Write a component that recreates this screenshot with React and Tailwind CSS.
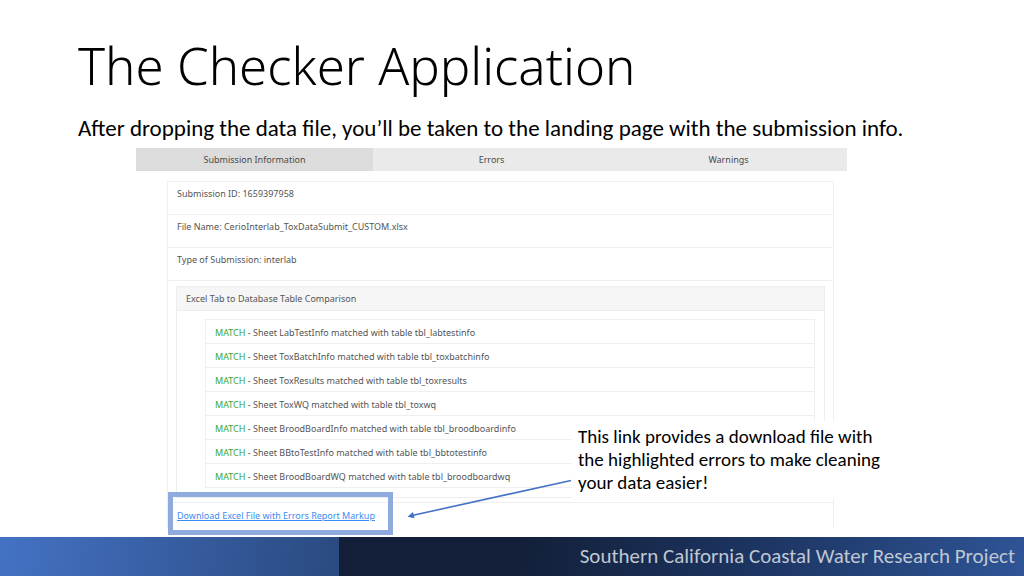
const tabs = ["Submission Information", "Errors", "Warnings"];

const details = [
  ["Submission ID", "1659397958"],
  ["File Name", "CerioInterlab_ToxDataSubmit_CUSTOM.xlsx"],
  ["Type of Submission", "interlab"],
];

const matches = [
  ["LabTestInfo", "tbl_labtestinfo"],
  ["ToxBatchInfo", "tbl_toxbatchinfo"],
  ["ToxResults", "tbl_toxresults"],
  ["ToxWQ", "tbl_toxwq"],
  ["BroodBoardInfo", "tbl_broodboardinfo"],
  ["BBtoTestInfo", "tbl_bbtotestinfo"],
  ["BroodBoardWQ", "tbl_broodboardwq"],
];

function Tabs() {
  return (
    <div role="tablist" className="grid grid-cols-3 bg-[#eaeaea]">
      {tabs.map((tab, i) => (
        <button
          key={tab}
          type="button"
          role="tab"
          aria-selected={i === 0}
          className="h-[23px] text-center text-[#4a4a4a] aria-selected:bg-[#dcdcdc]"
        >
          {tab}
        </button>
      ))}
    </div>
  );
}

function Comparison() {
  return (
    <section className="mx-2 mt-[5px] mb-1 border border-[#ededed]">
      <h2 className="flex h-6 items-center border-b border-[#ededed] bg-[#f6f6f6] px-[9px]">
        Excel Tab to Database Table Comparison
      </h2>
      <ul className="mt-2 mr-[9px] mb-[9px] ml-7 border border-b-0 border-[#efefef]">
        {matches.map(([sheet, table]) => (
          <li key={sheet} className="h-6 border-b border-[#efefef] px-[9px] pt-[5px]">
            <span className="text-[#3aa63a]">MATCH</span> - Sheet {sheet} matched with table {table}
          </li>
        ))}
      </ul>
    </section>
  );
}

function Callout() {
  return (
    <>
      <p className="absolute top-[273px] left-[436px] w-[340px] bg-white py-1 pl-[6px] font-[Carlito,Lato,sans-serif] text-[19px] leading-[23px] text-black">
        This link provides a download file with
        <br />
        the highlighted errors to make cleaning
        <br />
        your data easier!
      </p>
      <svg
        className="absolute top-[328px] left-[268px]"
        width="170"
        height="44"
        viewBox="0 0 170 44"
        aria-hidden="true"
      >
        <path d="M167 4.500 L8 39.500" stroke="#4472c4" strokeWidth="1.600" fill="none" />
        <path d="M3.500 40.700 L9 36 L10.500 42.300 Z" fill="#4472c4" />
      </svg>
    </>
  );
}

export default function App() {
  return (
    <div className="flex min-h-screen flex-col bg-white font-[Carlito,Lato,sans-serif] text-black">
      <header className="px-[78px] pt-8">
        <h1 className="font-['Noto_Sans','Open_Sans',sans-serif] text-[51px] leading-[66px] font-light">
          The Checker Application
        </h1>
        <p className="mt-4 text-[23px] leading-7 whitespace-nowrap">
          After dropping the data file, you’ll be taken to the landing page with the submission info.
        </p>
      </header>
      <main className="relative mt-[6px] mr-[177px] ml-[136px] flex-1 font-['Noto_Sans',sans-serif] text-[9px] leading-4 text-[#555]">
        <Tabs />
        <div className="mt-[10px] mr-[13px] ml-[31px] border border-b-0 border-[#efefef]">
          {details.map(([label, value]) => (
            <p key={label} className="h-[33px] border-b border-[#efefef] px-[9px] py-1">
              {label}: {value}
            </p>
          ))}
          <Comparison />
          <div className="relative border-t border-[#efefef] px-[9px] pt-[5px] pb-1">
            <a href="#markup" className="text-[#3b8cf5] underline">
              Download Excel File with Errors Report Markup
            </a>
            <div className="pointer-events-none absolute -top-[11px] left-0 h-[43px] w-[225px] border-[5px] border-[#8faadc]" />
          </div>
        </div>
        <Callout />
      </main>
      <footer className="flex h-[39px] items-center bg-[linear-gradient(100deg,#131f38_50%,#1d3664_75%,#2f5597_100%)]">
        <div className="h-full w-[339px] bg-[linear-gradient(100deg,#4472c4,#2a4a80)]" />
        <p className="flex-1 pr-[9px] pb-[2px] text-right text-[21px] leading-7 text-[#bfc7d2]">
          Southern California Coastal Water Research Project
        </p>
      </footer>
    </div>
  );
}
